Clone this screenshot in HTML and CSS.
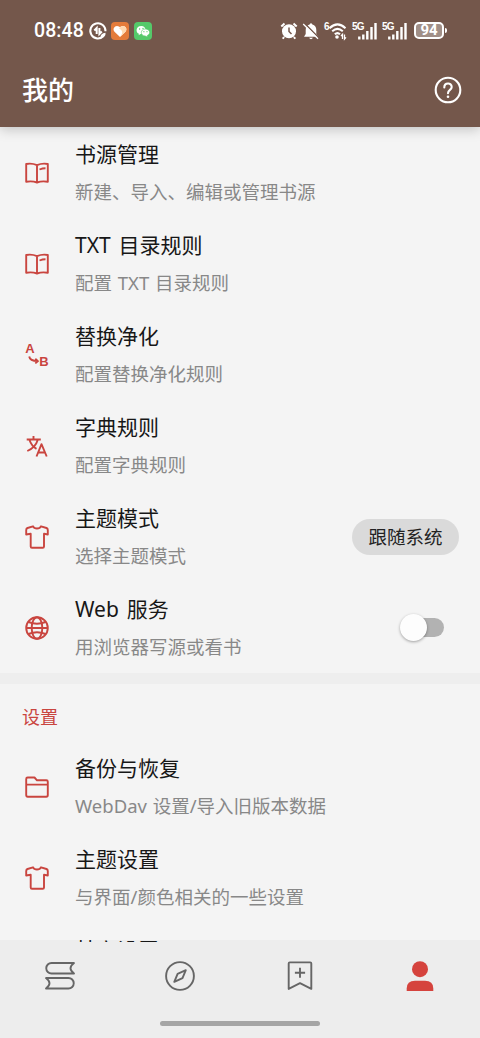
FILE: index.html
```html
<!DOCTYPE html>
<html lang="zh-CN">
<head>
<meta charset="utf-8">
<title>我的</title>
<link rel="stylesheet" href="styles.css">
</head>
<body>
<svg class="defs" aria-hidden="true">
  <symbol id="book" viewBox="0 0 24 24"><path d="M12 4.2Q7 1.900 1.200 3V20.800Q7 19.700 12 21.500Q17 19.700 22.800 20.800V3Q17 1.900 12 4.200V21.500M14.500 8.500Q17.500 7.200 20.500 7.200"/></symbol>
  <symbol id="shirt" viewBox="0 0 24 24"><path d="M8 1.300C9.500 4.300 14.500 4.300 16 1.300L21.500 3Q22.800 3.500 22.800 5V9.500L19 8.800V21.500Q19 22.800 17.700 22.800H7Q5.700 22.800 5.700 21.500V8.800L1.200 9.500V5Q1.200 3.500 2.500 3Z"/></symbol>
  <symbol id="globe" viewBox="0 0 24 24"><circle cx="12" cy="12" r="10.800"/><ellipse cx="12" cy="12" rx="5.300" ry="10.800"/><path d="M1.200 12H22.800M3.500 6Q12 9.500 20.500 6M3.500 18Q12 14.500 20.500 18"/></symbol>
  <symbol id="folder" viewBox="0 0 24 24"><path d="M1.200 19.500V4Q1.200 2.500 2.700 2.500H9.500L12 5.300H21.300Q22.800 5.300 22.800 6.800V20Q22.800 21.700 21.300 21.700H2.700Q1.200 21.700 1.200 20ZM1.200 9.600H22.800"/></symbol>
  <symbol id="signal" viewBox="0 0 26 18"><text x="0" y="7.700" class="tiny">5G</text><path d="M7.300 14.500V17.400M11.300 12.500V17.400M15.300 9V17.400M19.500 5V17.400M23.500 1V17.400"/></symbol>
</svg>
<div class="screen">
  <header class="appbar">
    <div class="status">
      <span class="time">08:48</span>
      <svg class="data" viewBox="0 0 18 18"><path class="line" d="M14.500 14A7.600 7.600 0 1 1 16.500 9.200M5.300 8.500L7.700 6V12M10.400 6V12L12.800 9.500"/><path class="fill" d="M11.500 15.500Q11.500 11.200 16.500 10.800Q17 15.800 11.500 15.500Z"/></svg>
      <span class="chip orange"><svg viewBox="0 0 18 18"><path class="fill" d="M9 15L3.500 9.700C.8 6.500 4.500 2.300 8 4.500L9 5.300L10 4.500C13.500 2.300 17.200 6.500 14.500 9.700Z"/><path class="tint" d="M10 4.500C13.500 2.300 17.200 6.500 14.500 9.700L9 15Q14 9 8 6.500Z"/></svg></span>
      <span class="chip green"><svg viewBox="0 0 18 18"><path class="fill" d="M7.300 4C1.500 4 1.500 11 5 11.700L4.500 13.300L6.700 12C14 12 12.500 4 7.300 4Z"/><path class="bubble" d="M11.300 7C6 7 6 14 11.300 14L13.300 15V13.500C17.200 12 16 7 11.300 7Z"/><g class="eyes"><circle cx="5.600" cy="7" r=".7"/><circle cx="9" cy="6.500" r=".7"/><circle cx="9.900" cy="9.700" r=".6"/><circle cx="13" cy="9.700" r=".6"/></g></svg></span>
      <span class="grow"></span>
      <svg class="alarm" viewBox="0 0 18 18"><circle class="fill" cx="9" cy="9.300" r="7"/><path class="line" d="M1.300 4.500L4.500 1.500M16.700 4.500L13.500 1.500M4 15L2.800 16.800M14 15L15.200 16.800"/><path class="cut" d="M9 5.500V9.500L11.500 12"/></svg>
      <svg class="bell" viewBox="0 0 18 18"><path class="fill" d="M7.600 2.500Q9 .2 10.400 2.500Q14.300 3.600 14.300 8V12L16 14.800H2L3.700 12V8Q3.700 3.600 7.600 2.500ZM7 15.800H11Q9 18.500 7 15.800Z"/><path class="cut" d="M2.500 1.200L17 16"/><path class="line thin" d="M1.200 2L16 16.800"/></svg>
      <svg class="wifi" viewBox="0 0 24 18"><text x="0" y="7.500" class="tiny">6</text><path class="line" d="M5.500 6.200Q13.500-1.500 21.500 6.200M8.200 9.300Q13.500 4.500 18.800 9.300M10.800 12.300Q13.500 9.900 16 12.300"/><circle class="fill" cx="13" cy="15" r="1.800"/><path class="line thin" d="M18.500 17V12.400L17 14M20.500 12.400V17L22 15.400"/></svg>
      <svg class="signal"><use href="#signal"/></svg>
      <svg class="signal"><use href="#signal"/></svg>
      <span class="battery">94</span>
    </div>
    <div class="titlebar">
      <h1>我的</h1>
      <svg class="help" viewBox="0 0 28 28"><circle cx="14" cy="14" r="12.300"/><path d="M10.300 11.500C10.300 6.300 17.700 6.400 17.700 11C17.700 14 14 13.700 14 17.200"/><circle class="dot" cx="14" cy="20.700" r="1.300"/></svg>
    </div>
  </header>
  <main class="list">
    <div class="row"><svg class="icon"><use href="#book"/></svg><div class="copy"><h2>书源管理</h2><p>新建、导入、编辑或管理书源</p></div></div>
    <div class="row"><svg class="icon"><use href="#book"/></svg><div class="copy"><h2>TXT 目录规则</h2><p>配置 TXT 目录规则</p></div></div>
    <div class="row"><svg class="icon" viewBox="0 0 24 24"><text class="letter" x=".3" y="10">A</text><text class="letter" x="14.300" y="23">B</text><path d="M4.200 13.500Q5 18 12.500 18.100M10.300 15.800L13 18.100L10.300 20.400"/></svg><div class="copy"><h2>替换净化</h2><p>配置替换净化规则</p></div></div>
    <div class="row"><svg class="icon" viewBox="0 0 24 24"><path d="M1.700 5.500H15.800M8.500 2V5.500M12.700 6Q10.500 13.500 2.300 17M4.500 6Q6.500 12 11.500 14.800M11.500 22.500L16.500 10.200L21.700 22.500M13.200 18.500H20"/></svg><div class="copy"><h2>字典规则</h2><p>配置字典规则</p></div></div>
    <div class="row"><svg class="icon"><use href="#shirt"/></svg><div class="copy"><h2>主题模式</h2><p>选择主题模式</p></div><span class="pill">跟随系统</span></div>
    <div class="row"><svg class="icon"><use href="#globe"/></svg><div class="copy"><h2>Web 服务</h2><p>用浏览器写源或看书</p></div><span class="switch"><i></i></span></div>
    <div class="divider"></div>
    <h3>设置</h3>
    <div class="row"><svg class="icon"><use href="#folder"/></svg><div class="copy"><h2>备份与恢复</h2><p>WebDav 设置/导入旧版本数据</p></div></div>
    <div class="row"><svg class="icon"><use href="#shirt"/></svg><div class="copy"><h2>主题设置</h2><p>与界面/颜色相关的一些设置</p></div></div>
    <div class="row"><svg class="icon"></svg><div class="copy"><h2>其它设置</h2></div></div>
  </main>
  <footer>
    <nav>
      <svg viewBox="0 0 32 32"><path d="M30 3H7.500A5.200 5.200 0 0 0 7.500 13.500H30Q23 8.200 30 3ZM2 18H24.500A5.200 5.200 0 0 1 24.500 28.500H2Q9 23.300 2 18Z"/></svg>
      <svg viewBox="0 0 32 32"><circle cx="16" cy="16" r="13.900"/><path d="M21.800 10.200L18.500 18.200L10.300 21.800L13.600 13.800Z"/></svg>
      <svg viewBox="0 0 32 32"><path d="M4.700 3.500Q4.700 2.400 5.800 2.400H26.200Q27.300 2.400 27.300 3.500V28.900L16 23.200L4.700 28.900ZM16 7.700V17.800M10.900 12.700H21.100"/></svg>
      <svg class="active" viewBox="0 0 32 32"><circle cx="16" cy="9.200" r="8"/><path d="M2.700 31V28.500Q2.700 20.800 11 20.800H21Q29.300 20.800 29.300 28.500V31Z"/></svg>
    </nav>
    <div class="handle"></div>
  </footer>
</div>
</body>
</html>
```
FILE: styles.css
```css
* { box-sizing: border-box; }
body { margin: 0; font-family: "Noto Sans", "Noto Sans CJK SC", sans-serif; background: #f4f4f4; }
h1, h2, h3, p { margin: 0; }
svg { display: block; flex: none; overflow: visible; }
.defs { position: absolute; width: 0; height: 0; }
.screen { width: 480px; height: 1038px; display: flex; flex-direction: column; overflow: hidden; }
.appbar { height: 127px; flex: none; background: #74574b; color: #fff; box-shadow: 0 2px 12px rgba(0,0,0,.22); z-index: 1; }
.status { height: 61px; padding: 0 33px 0 34px; display: flex; align-items: center; }
.status svg { fill: none; stroke: none; height: 18px; }
.status .fill { fill: #fff; }
.status .line { stroke: #fff; stroke-width: 2; }
.status .thin { stroke-width: 1.300; }
.status .cut { stroke: #74574b; stroke-width: 1.500; }
.time { font: 500 19.500px/24px Roboto, sans-serif; width: 55px; letter-spacing: .1px; }
.data { width: 18px; }
.chip { width: 18px; height: 18px; border-radius: 4px; margin-left: 4px; }
.chip.green { margin-left: 5px; background: #55c96a; }
.chip.orange { background: #e47b3a; }
.chip svg { width: 18px; }
.tint { fill: #ffd9b0; }
.status .bubble { fill: #fff; stroke: #55c96a; stroke-width: .6; }
.eyes { fill: #55c96a; }
.grow { flex: 1; }
.alarm { width: 18px; margin-right: 4px; }
.bell { width: 18px; margin-right: 4px; }
.wifi { width: 24px; margin-right: 4px; }
.signal { width: 26px; margin-right: 4px; }
.status .signal { stroke: #fff; stroke-width: 2.400; }
.tiny { font: 700 10px "Liberation Sans", sans-serif; letter-spacing: -.8px; fill: #fff; stroke: none; }
.battery { position: relative; width: 30px; height: 17px; border: 2px solid #fff; border-radius: 5px; background: #a18f87; font: 700 15px/13.500px Roboto, sans-serif; text-align: center; margin: 0 3px 0 2px; }
.battery::after { content: ""; position: absolute; right: -5px; top: 4px; width: 2px; height: 5px; background: #fff; border-radius: 0 2px 2px 0; }
.titlebar { height: 58px; padding: 0 18px 0 22px; display: flex; align-items: center; justify-content: space-between; }
h1 { font-size: 26px; line-height: 36px; font-weight: 500; }
.help { width: 28px; height: 28px; fill: none; stroke: #fff; stroke-width: 2.100; stroke-linecap: round; }
.help .dot { fill: #fff; stroke: none; }
.list { flex: 1; min-height: 0; overflow: hidden; background: linear-gradient(#f4f4f4 813px, #ededed 813px); }
.row { height: 91px; padding: 0 21px 0 25px; display: flex; align-items: center; }
.icon { width: 24px; height: 24px; margin-right: 26px; fill: none; stroke: #c9453f; stroke-width: 1.900; stroke-linejoin: round; }
.letter { font: 700 13px "Liberation Sans", sans-serif; fill: #c9453f; stroke: none; }
.copy { flex: 1; height: 91px; padding-top: 11px; }
h2 { font-size: 21px; line-height: 32px; font-weight: 400; color: #171717; word-spacing: 2.500px; }
p { font-size: 18.500px; line-height: 28px; margin-top: 8px; font-weight: 400; color: #888; white-space: nowrap; word-spacing: 1px; }
.pill { width: 107px; height: 36px; border-radius: 18px; background: #dadada; color: #222; font-size: 18.500px; line-height: 36px; text-align: center; }
.switch { position: relative; width: 40px; height: 19px; border-radius: 10px; background: #b2b2b2; margin-right: 15px; }
.switch i { position: absolute; left: -4px; top: -4px; width: 27px; height: 27px; border-radius: 50%; background: #fdfdfd; box-shadow: 0 1px 3px rgba(0,0,0,.35); }
.divider { height: 11px; background: #eee; }
h3 { height: 57px; padding: 5px 22px 0; font-size: 18px; line-height: 57px; font-weight: 400; color: #c9453f; }
footer { height: 96px; flex: none; background: #ededed; }
nav { height: 65px; padding-top: 2px; display: flex; justify-content: space-around; align-items: center; }
nav svg { width: 32px; height: 32px; fill: none; stroke: #666; stroke-width: 1.900; stroke-linejoin: round; }
nav .active { fill: #d5433d; stroke: none; }
.handle { width: 160px; height: 5px; margin: 14px auto 0; border-radius: 3px; background: #a5a5a5; }
```
